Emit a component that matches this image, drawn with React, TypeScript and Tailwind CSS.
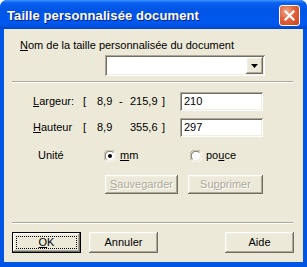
import React from "react";

const raised =
  "bg-[#ece9d8] shadow-[inset_-1px_-1px_#716f64,inset_1px_1px_#ffffff,inset_-2px_-2px_#aca899,inset_2px_2px_#f1efe2]";
const sunken =
  "bg-white shadow-[inset_1px_1px_#aca899,inset_-1px_-1px_#ffffff,inset_2px_2px_#716f64,inset_-2px_-2px_#f1efe2]";

function Radio({ checked }: { checked?: boolean }) {
  return (
    <svg width="12" height="12" viewBox="0 0 12 12" className="shrink-0">
      <path d="M1.5 10.5 A6 6 0 0 1 10.5 1.5" fill="none" stroke="#aca899" strokeWidth="1" />
      <path d="M10.5 1.5 A6 6 0 0 1 1.5 10.5" fill="none" stroke="#ffffff" strokeWidth="1" />
      <circle cx="6" cy="6" r="4.5" fill="#ffffff" />
      <path d="M2.6 9.4 A4.8 4.8 0 0 1 9.4 2.6" fill="none" stroke="#716f64" strokeWidth="1" />
      <path d="M9.4 2.6 A4.8 4.8 0 0 1 2.6 9.4" fill="none" stroke="#f1efe2" strokeWidth="1" />
      {checked && <circle cx="6" cy="6" r="2" fill="#000000" />}
    </svg>
  );
}

function Button({
  children,
  className,
  disabled,
  isDefault,
}: {
  children: React.ReactNode;
  className?: string;
  disabled?: boolean;
  isDefault?: boolean;
}) {
  if (isDefault) {
    return (
      <div className={`border border-black ${className ?? ""}`}>
        <div className={`h-full w-full p-[3px] ${raised}`}>
          <div className="h-full w-full border border-dotted border-black flex items-center justify-center">
            {children}
          </div>
        </div>
      </div>
    );
  }
  return (
    <div
      className={`flex items-center justify-center ${raised} ${
        disabled ? "text-[#aca899] [text-shadow:1px_1px_#ffffff]" : "text-black"
      } ${className ?? ""}`}
    >
      {children}
    </div>
  );
}

export default function App() {
  return (
    <div
      className="w-[307px] h-[267px] flex flex-col rounded-t-[7px] bg-[#0055e5] text-[11px] leading-[13px] text-black overflow-hidden"
      style={{ fontFamily: '"Liberation Sans", Arial, sans-serif' }}
    >
      <div className="h-[29px] shrink-0 flex items-center justify-between pl-[7px] pr-[7px] bg-[linear-gradient(to_bottom,#3d95ff_0%,#0a5ff0_10%,#0055e5_35%,#0058ee_80%,#0050e0_92%,#0041c8_100%)]">
        <span className="text-white font-bold text-[13px] [text-shadow:1px_1px_#0a1e8a] tracking-[0.1px] mt-[1px]">
          Taille personnalisée document
        </span>
        <div className="w-[21px] h-[21px] rounded-[3px] border border-white bg-[radial-gradient(circle_at_35%_30%,#f0a58a_0%,#e0643c_45%,#c8401d_100%)] flex items-center justify-center mt-[2px]">
          <svg width="11" height="11" viewBox="0 0 11 11">
            <path d="M1.5 1.5 L9.5 9.5 M9.5 1.5 L1.5 9.5" stroke="#ffffff" strokeWidth="2.2" strokeLinecap="square" />
          </svg>
        </div>
      </div>

      <div className="flex-1 flex flex-col bg-[#ece9d8] ml-[4px] mr-[4px] mb-[5px]">
        <div className="pt-[10px] pl-[16px]">
          <u>N</u>om de la taille personnalisée du document
        </div>

        <div className={`mt-[3px] ml-[101px] w-[160px] h-[21px] ${sunken} flex justify-end p-[2px]`}>
          <div className={`w-[17px] h-[17px] ${raised} flex items-center justify-center`}>
            <svg width="7" height="4" viewBox="0 0 7 4">
              <path d="M0 0 H7 L3.5 4 Z" fill="#000000" />
            </svg>
          </div>
        </div>

        <div className="mt-[5px] ml-[8px] w-[281px] border-t border-t-[#aca899] border-b border-b-white" />

        <div className="mt-[9px] pl-[29px] flex items-center h-[19px]">
          <span className="w-[50px]">
            <u>L</u>argeur:
          </span>
          <span className="w-[14px]">[</span>
          <span className="w-[22px]">8,9</span>
          <span className="w-[11px]">-</span>
          <span className="w-[32px]">215,9</span>
          <span className="w-[18px]">]</span>
          <div className={`w-[83px] h-[19px] ${sunken} flex items-center pl-[4px]`}>210</div>
        </div>

        <div className="mt-[7px] pl-[29px] flex items-center h-[19px]">
          <span className="w-[50px]">
            <u>H</u>auteur
          </span>
          <span className="w-[14px]">[</span>
          <span className="w-[33px]">8,9</span>
          <span className="w-[32px]">355,6</span>
          <span className="w-[18px]">]</span>
          <div className={`w-[83px] h-[19px] ${sunken} flex items-center pl-[4px]`}>297</div>
        </div>

        <div className="mt-[11px] pl-[34px] flex items-center h-[15px]">
          <span className="w-[66px]">Unité</span>
          <Radio checked />
          <span className="ml-[4px] w-[70px]">
            <u>m</u>m
          </span>
          <Radio />
          <span className="ml-[4px]">
            po<u>u</u>ce
          </span>
        </div>

        <div className="mt-[12px] ml-[101px] flex gap-[10px]">
          <Button disabled className="w-[73px] h-[19px]">
            <span>
              <u>S</u>auvegarder
            </span>
          </Button>
          <Button disabled className="w-[75px] h-[19px]">
            <span>
              Su<u>p</u>primer
            </span>
          </Button>
        </div>

        <div className="mt-[28px] ml-[8px] w-[281px] border-t border-t-[#aca899] border-b border-b-white" />

        <div className="mt-[8px] ml-[8px] mr-[9px] flex">
          <Button isDefault className="w-[69px] h-[21px]">
            <span>
              <u>O</u>K
            </span>
          </Button>
          <Button className="w-[69px] h-[21px] ml-[8px]">Annuler</Button>
          <Button className="w-[69px] h-[21px] ml-auto">Aide</Button>
        </div>
      </div>
    </div>
  );
}
